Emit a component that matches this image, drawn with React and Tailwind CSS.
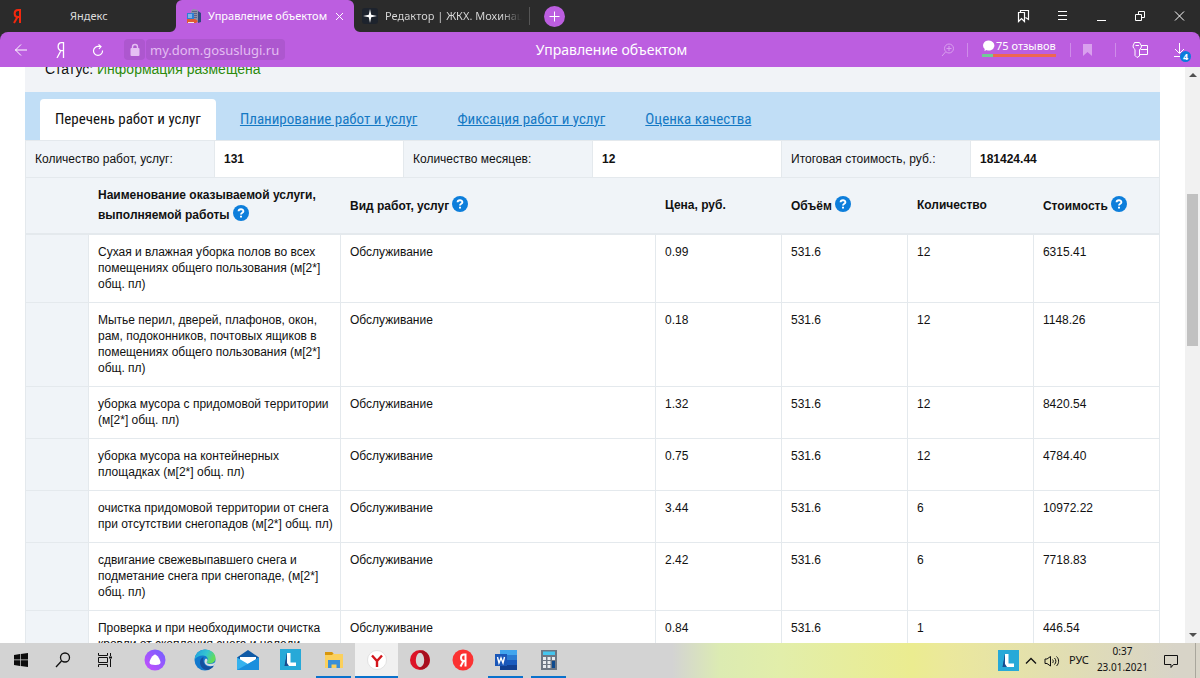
import clsx from 'clsx';

const TABS = [
  { label: 'Планирование работ и услуг', ml: 'ml-6' },
  { label: 'Фиксация работ и услуг', ml: 'ml-10' },
  { label: 'Оценка качества', ml: 'ml-10' },
];

const SUMMARY = [
  { label: 'Количество работ, услуг:', value: '131' },
  { label: 'Количество месяцев:', value: '12' },
  { label: 'Итоговая стоимость, руб.:', value: '181424.44' },
];

const COLUMNS = [
  { label: 'Наименование оказываемой услуги,\nвыполняемой работы', help: true },
  { label: 'Вид работ, услуг', help: true },
  { label: 'Цена, руб.' },
  { label: 'Объём', help: true },
  { label: 'Количество' },
  { label: 'Стоимость', help: true },
];

const ROWS = [
  ['Сухая и влажная уборка полов во всех\nпомещениях общего пользования (м[2*]\nобщ. пл)', '0.99', '12', '6315.41'],
  ['Мытье перил, дверей, плафонов, окон,\nрам, подоконников, почтовых ящиков в\nпомещениях общего пользования (м[2*]\nобщ. пл)', '0.18', '12', '1148.26'],
  ['уборка мусора с придомовой территории\n(м[2*] общ. пл)', '1.32', '12', '8420.54'],
  ['уборка мусора на контейнерных\nплощадках (м[2*] общ. пл)', '0.75', '12', '4784.40'],
  ['очистка придомовой территории от снега\nпри отсутствии снегопадов (м[2*] общ. пл)', '3.44', '6', '10972.22'],
  ['сдвигание свежевыпавшего снега и\nподметание снега при снегопаде, (м[2*]\nобщ. пл)', '2.42', '6', '7718.83'],
  ['Проверка и при необходимости очистка\nкровли от скопления снега и наледи', '0.84', '1', '446.54'],
];

const uiFont = "font-['Noto_Sans',sans-serif]";

const Line = ({ size = 16, width = 1, className, children, viewBox = '0 0 16 16' }) => (
  <svg
    width={size}
    height={size}
    viewBox={viewBox}
    fill="none"
    stroke="currentColor"
    strokeWidth={width}
    className={clsx('block shrink-0', className)}
    aria-hidden="true"
  >
    {children}
  </svg>
);

const SiteIcon = () => (
  <svg width="16" height="16" viewBox="0 0 16 16" className="shrink-0" aria-hidden="true">
    <path d="M5 3 7 1l5 1v12H5z" fill="#8d93a8" />
    <path d="M12 3l3 2v9l-3 1z" fill="#31487f" />
    <path d="M6 3.500h5M6 5.500h5M8 7.500h3M8 9.500h3" stroke="#5a628a" />
    <path d="M1 5h7v6H1z" fill="#2e7fd4" />
    <path d="M2 7h4M2 9h4" stroke="#cfe4fb" />
    <path d="M1 11h8l3 2-2 2H1z" fill="#e05a35" />
    <path d="M2 14.500h6" stroke="#f5e8dc" />
  </svg>
);

const TabStrip = () => (
  <div className="flex h-8 shrink-0 items-center bg-[#2b2b2b] text-[11px] text-[#dcdcdc]">
    <button type="button" className="flex h-8 w-44 items-center" aria-label="Яндекс">
      <Line size={16} width={2} className="ml-[9px] text-[#f2280e]">
        <path d="M11 1v14M11 2H9C4.500 2 4.500 9 9 9h2M8.500 9 5 15" />
      </Line>
      <span className="ml-[45px]">Яндекс</span>
    </button>
    <div className="relative flex h-8 w-[178px] items-center rounded-t-md bg-[#bc5ee0] pl-[10px] text-white">
      <svg width="6" height="6" viewBox="0 0 6 6" className="absolute bottom-0 -left-[6px]" aria-hidden="true">
        <path d="M6 0v6H0a6 6 0 0 0 6-6z" fill="#bc5ee0" />
      </svg>
      <svg width="6" height="6" viewBox="0 0 6 6" className="absolute -right-[6px] bottom-0" aria-hidden="true">
        <path d="M0 0v6h6a6 6 0 0 1-6-6z" fill="#bc5ee0" />
      </svg>
      <SiteIcon />
      <span className="ml-[6px] w-[119px] whitespace-nowrap">Управление объектом</span>
      <button type="button" className="ml-2" aria-label="Закрыть вкладку">
        <Line size={9} viewBox="0 0 9 9">
          <path d="m1 1 7 7M8 1 1 8" />
        </Line>
      </button>
    </div>
    <button type="button" className="flex h-8 w-[168px] items-center pl-2">
      <svg width="16" height="16" viewBox="0 0 16 16" className="shrink-0" aria-hidden="true">
        <rect width="16" height="16" rx="3" fill="#1d232d" />
        <path d="m8 1 1.200 5.800L15 8 9.200 9.200 8 15 6.800 9.200 1 8l5.800-1.200z" fill="#fff" />
      </svg>
      <span className="ml-[7px] w-[137px] overflow-hidden bg-linear-to-r from-[#dcdcdc] from-85% to-[#2b2b2b] bg-clip-text text-left whitespace-nowrap text-transparent">
        Редактор | ЖКХ. Мохинаци
      </span>
    </button>
    <span className="ml-[7px] h-[18px] w-px bg-[#555]" />
    <button
      type="button"
      aria-label="Новая вкладка"
      className="ml-[14px] flex size-[21px] items-center justify-center rounded-full bg-[#bc5ee0] text-white"
    >
      <Line size={11} viewBox="0 0 11 11">
        <path d="M5.500.500v10M.500 5.500h10" />
      </Line>
    </button>
    <div className="ml-auto flex items-center gap-[25px] pr-[14px] text-white">
      <button type="button" aria-label="Коллекции">
        <Line size={14} viewBox="0 0 14 14">
          <path d="M2.500 3.500h6v9l-3-3-3 3zM4.500 3V1.500h8v9l-3-2" strokeWidth="1.200" />
        </Line>
      </button>
      <button type="button" aria-label="Меню">
        <Line size={14} viewBox="0 0 14 14">
          <path d="M3 2.500h9M3 6.500h9M3 10.500h9" />
        </Line>
      </button>
      <button type="button" aria-label="Свернуть">
        <Line size={14} viewBox="0 0 14 14">
          <path d="M3 11.500h9" />
        </Line>
      </button>
      <button type="button" aria-label="Восстановить">
        <Line size={14} viewBox="0 0 14 14">
          <path d="M2.500 5.500h6v6h-6zM5.500 5V2.500h6v6H9" />
        </Line>
      </button>
      <button type="button" aria-label="Закрыть">
        <Line size={14} viewBox="0 0 14 14">
          <path d="m3 2.500 9 9M12 2.500l-9 9" />
        </Line>
      </button>
    </div>
  </div>
);

const AddressBar = () => (
  <div className="shrink-0 bg-[#2b2b2b]">
    <div className="flex h-[35px] items-center rounded-t-lg bg-[#bc5ee0] text-white">
      <div className="flex flex-1 items-center">
        <button type="button" className="ml-[14px]" aria-label="Назад">
          <Line size={14} viewBox="0 0 14 14">
            <path d="M13 7H1M7 1.500 1.500 7 7 12.500" />
          </Line>
        </button>
        <button type="button" className="ml-6" aria-label="Главная">
          <Line size={16} width={1.3}>
            <path d="M11.500 0v16M11.500.700H9.500c-4.500 0-4.500 8 0 8h2M9 8.500 5 16" />
          </Line>
        </button>
        <button type="button" className="ml-6" aria-label="Обновить">
          <Line size={12} viewBox="0 0 12 12" width={1.2}>
            <path d="M7 2.500a4.500 4.500 0 1 0 3.500 4M4.500 2.500H9M6.500.500l2.500 2-2 2.500" />
          </Line>
        </button>
        <span className="ml-5 flex size-[21px] items-center justify-center rounded bg-[#ad57cf]">
          <Line size={14} viewBox="0 0 14 14" width={2} className="text-[#e5bff3]">
            <rect x="2.500" y="5" width="9" height="8" rx="1" fill="currentColor" stroke="none" />
            <path d="M4.500 6V4a2.500 2.500 0 0 1 5 0v2" strokeWidth="1.400" />
          </Line>
        </span>
        <button type="button" className="ml-px h-[21px] rounded bg-[#ad57cf] px-1 pr-[6px] text-[13px] leading-5 text-[#e3bdf2]">
          my.dom.gosuslugi.ru
        </button>
      </div>
      <span className="ml-[23px] text-sm">Управление объектом</span>
      <div className="flex flex-1 items-center justify-end text-[#d9a0ee]">
        <button type="button" aria-label="Масштаб">
          <Line size={14} viewBox="0 0 14 14">
            <circle cx="8" cy="5.500" r="4.500" />
            <path d="M4.500 9 1 13M5.500 5.500h5M8 3v5" />
          </Line>
        </button>
        <span className="ml-[12px] h-[14px] w-px bg-[#cf8ce9]" />
        <button type="button" className="mb-1 ml-[14px] w-[74px] text-white">
          <span className="flex items-center gap-px text-[11px] leading-4 whitespace-nowrap">
            <svg width="13" height="12" viewBox="0 0 12 12" className="shrink-0" aria-hidden="true">
              <path d="M6 .5a5.500 5 0 1 1-2 9.500L2 11l.2-2A5.500 5 0 0 1 6 .5z" fill="#fff" />
            </svg>
            75 отзывов
          </span>
          <span className="flex h-[3px]">
            <span className="w-[11px] bg-[#71cb96]" />
            <span className="flex-1 bg-[#ee6652]" />
          </span>
        </button>
        <span className="ml-[14px] h-[14px] w-px bg-[#cf8ce9]" />
        <button type="button" className="ml-3" aria-label="Закладка">
          <svg width="9" height="12" viewBox="0 0 9 12" aria-hidden="true">
            <path d="M0 0h9v12L4.500 8 0 12z" fill="#d9a0ee" />
          </svg>
        </button>
        <span className="ml-[23px] h-[14px] w-px bg-[#cf8ce9]" />
        <button type="button" className="ml-4 text-white" aria-label="Пароли и карты">
          <Line size={17} viewBox="0 0 17 17">
            <path d="M3 8.500A4 4 0 0 1 1 5l1.500-3.500h5L9.500 5a4 4 0 0 1-2 3.500V15L5 16.500l-2-2zM3.500 4.500h3.500M9 4.500h6.500v9H8M8.500 8.500H16" />
          </Line>
        </button>
        <button type="button" className="relative mr-[12px] ml-[25px] text-white" aria-label="Загрузки">
          <Line size={14} viewBox="0 0 14 14">
            <path d="M5.500 0v10M1 6l4.500 4.500L10 6M0 13.500h6" />
          </Line>
          <span className="absolute top-2 left-[6px] size-[11px] rounded-full bg-[#0b7bdc] text-center text-[9px] leading-[11px] font-bold">
            4
          </span>
        </button>
      </div>
    </div>
  </div>
);

const HelpButton = () => (
  <button type="button" aria-label="Справка" className="ml-[3px] inline-block size-4 align-[-2px]">
    <svg width="16" height="16" viewBox="0 0 16 16" className="block" aria-hidden="true">
      <circle cx="8" cy="8" r="8" fill="#0d7edb" />
      <path d="M5.600 6.300C5.600 3.600 10.400 3.600 10.400 6.200 10.400 7.800 8 7.700 8 9.500" fill="none" stroke="#fff" strokeWidth="1.900" />
      <path d="M7 10.700h2v1.900H7z" fill="#fff" />
    </svg>
  </button>
);

const WorksTable = () => (
  <table className="w-full table-fixed border-separate border-spacing-0 border-l border-[#e4e9ed] text-left">
    <colgroup>
      <col className="w-1/18" />
      <col className="w-4/18" />
      <col className="w-5/18" />
      <col className="w-2/18" />
      <col className="w-2/18" />
      <col className="w-2/18" />
      <col className="w-2/18" />
    </colgroup>
    <thead>
      <tr className="h-[57px] bg-[#f0f4f8]">
        <td className="border-b-2 border-[#e4e9ed]" />
        {COLUMNS.map((col) => (
          <th
            key={col.label}
            scope="col"
            className="border-b-2 border-[#e4e9ed] px-[9px] leading-[19px] font-bold whitespace-pre last:border-r"
          >
            {col.label}
            {col.help && <HelpButton />}
          </th>
        ))}
      </tr>
    </thead>
    <tbody>
      {ROWS.map(([name, price, count, cost]) => (
        <tr key={name}>
          <td className="border-r border-b border-[#e4e9ed] bg-[#f0f4f8]" />
          {[name, 'Обслуживание', price, '531.6', count, cost].map((cell, i) => (
            <td
              key={i}
              className="border-r border-b border-[#e4e9ed] px-[9px] pt-[9px] pb-2.5 align-top leading-4 whitespace-pre"
            >
              {cell}
            </td>
          ))}
        </tr>
      ))}
    </tbody>
  </table>
);

const Page = () => (
  <div className="flex min-h-0 flex-1 overflow-hidden bg-white font-['Liberation_Sans',Arial,sans-serif] text-xs text-[#111]">
    <main className="mr-[25px] ml-[25px] min-w-0 flex-1">
      <div className="h-[25px] overflow-hidden bg-[#f1f3f7] pl-5">
        <p className="-mt-2 text-sm leading-5">
          Статус: <span className="text-[#2c8a0c]">Информация размещена</span>
        </p>
      </div>
      <nav className="flex h-12 items-end bg-[#c1def6] pl-[15px] font-['Roboto_Condensed',sans-serif] text-[15px]">
        <a href="#list" className="flex h-[41px] items-center rounded-t bg-white px-[15px] text-[#111]">
          Перечень работ и услуг
        </a>
        {TABS.map((tab) => (
          <a
            key={tab.label}
            href="#tab"
            className={clsx('flex h-[41px] items-center text-[#1579c4] underline', tab.ml)}
          >
            {tab.label}
          </a>
        ))}
      </nav>
      <dl className="grid grid-cols-6 border-t border-l border-[#e4e9ed] leading-4">
        {SUMMARY.map((item) => (
          <div key={item.label} className="contents">
            <dt className="border-r border-b border-[#e4e9ed] bg-[#f0f4f8] px-[9px] py-[10px]">{item.label}</dt>
            <dd className="border-r border-b border-[#e4e9ed] px-[9px] py-[10px] font-bold">{item.value}</dd>
          </div>
        ))}
      </dl>
      <WorksTable />
    </main>
    <div className="flex w-[15px] shrink-0 flex-col items-center bg-[#f1f1f1]">
      <span className="mt-[6px] border-x-4 border-b-4 border-x-transparent border-b-[#505050]" />
      <span className="mt-[117px] h-[152px] w-[11px] bg-[#c1c1c1]" />
      <span className="mt-auto mb-[6px] border-x-4 border-t-4 border-x-transparent border-t-[#505050]" />
    </div>
  </div>
);

const LingvoIcon = () => (
  <svg width="21" height="21" viewBox="0 0 21 21" aria-hidden="true">
    <path d="M0 0h21v21H0z" fill="#27a9d8" />
    <path d="M7 4 4.500 17H8l2-2z" fill="#123f7a" />
    <path d="M7 4h3.500v9.500H16V17H7z" fill="#fff" />
    <path d="M7 4v10l2 3H5z" fill="#1a4f93" />
  </svg>
);

const APPS = [
  {
    name: 'Пуск',
    width: 'w-[42px]',
    icon: (
      <svg width="14" height="14" viewBox="0 0 14 14" fill="#0c0c0c" aria-hidden="true">
        <path d="M0 2l6-.9v5.500H0zM6.700 1 14 0v6.600H6.700zM0 7.300h6v5.600L0 12zM6.700 7.300H14V14l-7.300-1z" />
      </svg>
    ),
  },
  {
    name: 'Поиск',
    width: 'w-[42px]',
    icon: (
      <Line size={16} width={1.3}>
        <circle cx="10" cy="5.500" r="4.500" />
        <path d="m6.500 9-5.500 6" />
      </Line>
    ),
  },
  {
    name: 'Представление задач',
    width: 'w-[42px]',
    icon: (
      <Line size={16}>
        <path d="M1.500 1v2.500h9V1M1.500 5.500h9v5h-9zM1.500 15v-2.500h9V15M13.500 1v3M13.500 7v8" />
        <path d="M12 4.500h3v2h-3z" fill="currentColor" stroke="none" />
      </Line>
    ),
  },
  {
    name: 'Алиса',
    width: 'w-[57px]',
    icon: (
      <svg width="22" height="22" viewBox="0 0 22 22" aria-hidden="true">
        <defs>
          <linearGradient id="alice" x1="0" y1="1" x2="1" y2="0">
            <stop offset="0" stopColor="#c94dfc" />
            <stop offset="1" stopColor="#6f61ff" />
          </linearGradient>
        </defs>
        <circle cx="11" cy="11" r="10.500" fill="url(#alice)" />
        <path d="M11 5.500c2 0 5.500 5.500 5.500 8 0 1.800-2.500 2.500-5.500 2.500s-5.500-.7-5.500-2.500c0-2.500 3.500-8 5.500-8z" fill="#fff" />
      </svg>
    ),
  },
  {
    name: 'Edge',
    icon: (
      <svg width="22" height="22" viewBox="0 0 22 22" aria-hidden="true">
        <defs>
          <linearGradient id="edge" x1="0" y1="0" x2="1" y2=".4">
            <stop offset="0" stopColor="#1d9be0" />
            <stop offset=".6" stopColor="#35c6d0" />
            <stop offset="1" stopColor="#62dc5a" />
          </linearGradient>
        </defs>
        <circle cx="11" cy="11" r="10.500" fill="#1279ce" />
        <path d="M.6 10.500C1 4 6 .5 11 .5c6 0 10.500 4 10.500 8.500 0 4-3 5.500-6 5.500-2 0-3.500-1-2.500-2C15 10 13 6.500 9 6.500c-4 0-7 2-8.400 4z" fill="url(#edge)" />
        <path d="M9.500 8C7 9 6 11 6 13.500c0 4 3 7 7 7.500 3-.5 5.500-2 7-4.500-6 3-12 0-10.500-8.500z" fill="#154f9e" />
        <path d="M13 12.500c-1 1 .5 2.500 3 2.500s4-.8 5.500-2.200c-.3 1.700-.8 2.700-1.500 3.700-5 2-9.500-.5-9.500-4 0-1.500.5-2.500 1.500-3 1.500.5 2 2 1 3z" fill="#d5dde3" />
      </svg>
    ),
  },
  {
    name: 'Почта',
    icon: (
      <svg width="22" height="22" viewBox="0 0 22 22" aria-hidden="true">
        <path d="M0 8.500 11 1l11 7.500v3H0z" fill="#0f5aa6" />
        <path d="M3 8h16v8H3z" fill="#fff" />
        <path d="M0 8.500 11 15l11-6.500V21H0z" fill="#35b2ee" />
        <path d="M0 21 22 8.500V21z" fill="#1a8fdd" />
      </svg>
    ),
  },
  { name: 'Lingvo', icon: <LingvoIcon /> },
  {
    name: 'Проводник',
    state: 'open',
    icon: (
      <svg width="20" height="18" viewBox="0 0 20 18" aria-hidden="true">
        <path d="M1 1h7l2 2h9v14H1z" fill="#fbd05c" />
        <path d="M1 1h7l1.500 1.500L8 4H1z" fill="#d8960c" />
        <path d="M4 9h12v8h-3.500v-3.500h-5V17H4z" fill="#3a8fd8" />
      </svg>
    ),
  },
  {
    name: 'Яндекс.Браузер',
    state: 'active',
    icon: (
      <svg width="20" height="20" viewBox="0 0 20 20" aria-hidden="true">
        <circle cx="10" cy="10" r="9.500" fill="#fff" stroke="#ccc" strokeWidth=".5" />
        <path d="M5 5.500 10 11l5-5.500M10 10.500V17" fill="none" stroke="#d3151b" strokeWidth="2.400" />
      </svg>
    ),
  },
  {
    name: 'Opera',
    icon: (
      <svg width="20" height="20" viewBox="0 0 20 20" aria-hidden="true">
        <circle cx="10" cy="10" r="10" fill="#dc1428" />
        <path d="M14 1a10 10 0 0 1 0 18c-2 1-5 0-6-2 4 1 6-3 6-7s-2-8-6-7c1-2 4-3 6-2z" fill="#a80f1e" />
        <ellipse cx="10" cy="10" rx="4.200" ry="7.200" fill="#d6d6d6" />
      </svg>
    ),
  },
  {
    name: 'Яндекс',
    icon: (
      <svg width="22" height="22" viewBox="0 0 22 22" aria-hidden="true">
        <circle cx="11" cy="11" r="10.500" fill="#fb3333" />
        <path d="M13.500 4.500v13M13.500 5.500H12c-4 0-4 6.500 0 6.500h1.500M11.500 12 8.500 17.500" fill="none" stroke="#fff" strokeWidth="2" />
      </svg>
    ),
  },
  {
    name: 'Word',
    state: 'open',
    icon: (
      <svg width="22" height="20" viewBox="0 0 22 20" aria-hidden="true">
        <path d="M5 0h17v5H5z" fill="#41a5ee" />
        <path d="M5 5h17v5H5z" fill="#2b7cd3" />
        <path d="M5 10h17v5H5z" fill="#185abd" />
        <path d="M5 15h17v5H5z" fill="#103f91" />
        <path d="M0 4h12v12H0z" fill="#1a57b8" />
        <path d="m2.500 7 1.500 6L6 8l2 5 1.500-6" fill="none" stroke="#fff" strokeWidth="1.400" />
      </svg>
    ),
  },
  {
    name: 'Калькулятор',
    state: 'open',
    icon: (
      <svg width="18" height="22" viewBox="0 0 18 22" aria-hidden="true">
        <path d="M1 1h16v20H1z" fill="#6d7683" />
        <path d="M3 2.500h12V6H3z" fill="#45c5ee" />
        <path d="M3 8h3v3H3zM7.500 8h3v3h-3zM12 8h3v3h-3zM3 12h3v3H3zM7.500 12h3v3h-3zM3 16h3v3H3zM7.500 16h3v3h-3z" fill="#e8ebef" />
        <path d="M12 12h3v7h-3z" fill="#0e4a8e" />
      </svg>
    ),
  },
];

const Taskbar = () => (
  <footer className="flex h-[35px] shrink-0 items-stretch bg-[linear-gradient(90deg,#d3d3d3_56%,#dcebb2_60%,#e2eeaa_65%,#ebec90_76%,#ebe89c_79%,#d8d4c8_98%)] text-[#111]">
    {APPS.map((app) => (
      <button
        key={app.name}
        type="button"
        aria-label={app.name}
        className={clsx(
          'flex flex-col items-center',
          app.width ?? 'w-[43px]',
          app.state === 'active' && 'bg-[#f0f0f0]',
        )}
      >
        <span className="flex flex-1 items-center">{app.icon}</span>
        <span
          className={clsx(
            'h-0.5',
            app.state === 'active' ? 'w-full' : 'w-[35px]',
            app.state && 'bg-[#0a72cc]',
          )}
        />
      </button>
    ))}
    <div className="ml-auto flex items-center">
      <LingvoIcon />
      <button type="button" className="ml-[6px]" aria-label="Скрытые значки">
        <Line size={12} width={1.3} viewBox="0 0 12 12">
          <path d="m1 8.500 5-5 5 5" />
        </Line>
      </button>
      <button type="button" className="ml-[7px]" aria-label="Громкость">
        <Line size={16}>
          <path d="M1 6v4.500h2L6.500 13V3.500L3 6zM8.500 6.500c1 1 1 2.500 0 3.500M10.500 5c1.800 1.800 1.800 4.700 0 6.500M12.500 3.500c2.800 2.500 2.800 7 0 9.500" />
        </Line>
      </button>
      <button type="button" className="ml-[9px] text-[11px]">
        РУС
      </button>
      <div className="ml-2 pb-[3px] text-center text-[10px] leading-4">
        <div>0:37</div>
        <div>23.01.2021</div>
      </div>
      <button type="button" className="ml-4" aria-label="Уведомления">
        <Line size={14} viewBox="0 0 14 14">
          <path d="M.500 1.500h13v9H9.500l-2.500 3v-3H.500z" />
        </Line>
      </button>
      <span className="ml-[17px] h-full w-px bg-[#a9a69c]" />
      <span className="w-1" />
    </div>
  </footer>
);

const App = () => {
  return (
    <div className={clsx('flex h-screen flex-col overflow-hidden', uiFont)}>
      <TabStrip />
      <AddressBar />
      <Page />
      <Taskbar />
    </div>
  );
};

export default App;
